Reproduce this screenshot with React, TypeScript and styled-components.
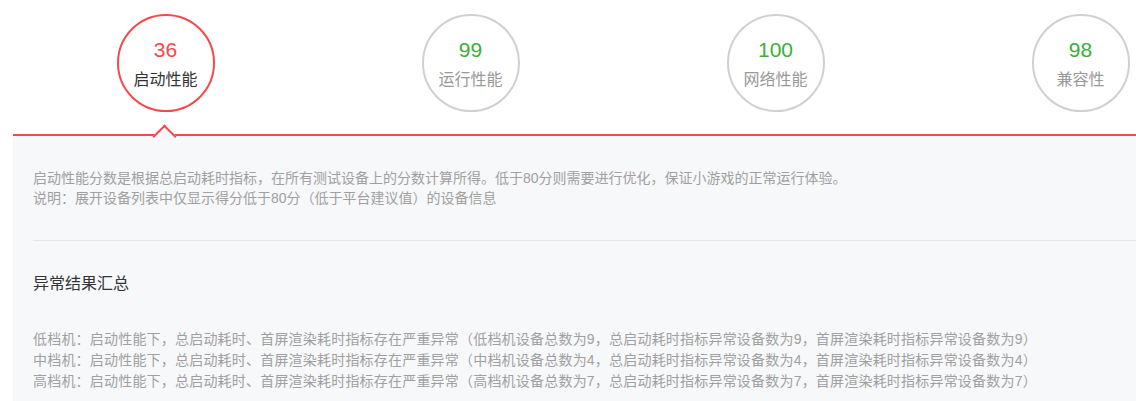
import React from 'react';
import styled, { createGlobalStyle } from 'styled-components';

const GlobalStyle = createGlobalStyle`
  html, body {
    margin: 0;
    padding: 0;
    background: #ffffff;
    font-family: "Liberation Sans", "Noto Sans CJK SC", sans-serif;
  }
`;

type Score = {
  value: number;
  label: string;
};

const scores: Score[] = [
  { value: 36, label: '启动性能' },
  { value: 99, label: '运行性能' },
  { value: 100, label: '网络性能' },
  { value: 98, label: '兼容性' },
];

const Page = styled.div`
  width: 1136px;
  height: 401px;
  overflow: hidden;
  padding-left: 13px;
  box-sizing: border-box;
`;

const Inner = styled.div`
  width: 1240px;
`;

const TabBar = styled.div`
  display: flex;
  height: 134px;
`;

const Tab = styled.div`
  flex: 0 0 305px;
  display: flex;
  justify-content: center;
  padding-top: 14px;
  position: relative;
`;

const Circle = styled.div<{ $active: boolean }>`
  width: 98px;
  height: 98px;
  box-sizing: border-box;
  border-radius: 50%;
  border: 2px solid ${(p) => (p.$active ? '#f5494b' : '#d0d0d0')};
  display: flex;
  flex-direction: column;
  align-items: center;
  padding-top: 20px;
`;

const Value = styled.div<{ $bad: boolean }>`
  font-size: 21px;
  line-height: 28px;
  color: ${(p) => (p.$bad ? '#f5494b' : '#38b03a')};
`;

const Label = styled.div<{ $active: boolean }>`
  margin-top: 5px;
  font-size: 16px;
  line-height: 22px;
  color: ${(p) => (p.$active ? '#333333' : '#999999')};
`;

const Notch = styled.span`
  position: absolute;
  left: 50%;
  bottom: -11px;
  width: 17px;
  height: 17px;
  margin-left: -10px;
  box-sizing: border-box;
  background: #f7f8fa;
  border-top: 2px solid #f5494b;
  border-left: 2px solid #f5494b;
  transform: rotate(45deg);
  z-index: 1;
`;

const Panel = styled.div`
  background: #f7f8fa;
  border-top: 2px solid #f5494b;
  padding: 32px 0 40px 20px;
  min-height: 300px;
`;

const Desc = styled.p`
  margin: 0;
  font-size: 14px;
  line-height: 20px;
  color: #a0a0a0;
`;

const Divider = styled.div`
  height: 1px;
  background: #e6e7ea;
  margin: 32px 0 0;
`;

const Heading = styled.h3`
  margin: 32px 0 0;
  font-size: 16px;
  line-height: 22px;
  font-weight: normal;
  color: #333333;
`;

const List = styled.div`
  margin-top: 34px;
`;

const Row = styled.div`
  font-size: 14px;
  line-height: 21px;
  color: #a0a0a0;
  white-space: nowrap;
  letter-spacing: 0.2px;
`;

const tiers = [
  { name: '低档机', total: 9, start: 9, render: 9 },
  { name: '中档机', total: 4, start: 4, render: 4 },
  { name: '高档机', total: 7, start: 7, render: 7 },
];

export default function App() {
  return (
    <Page>
      <GlobalStyle />
      <Inner>
        <TabBar>
          {scores.map((s, i) => (
            <Tab key={s.label}>
              <Circle $active={i === 0}>
                <Value $bad={s.value < 80}>{s.value}</Value>
                <Label $active={i === 0}>{s.label}</Label>
              </Circle>
              {i === 0 && <Notch />}
            </Tab>
          ))}
        </TabBar>
        <Panel>
          <Desc>启动性能分数是根据总启动耗时指标，在所有测试设备上的分数计算所得。低于80分则需要进行优化，保证小游戏的正常运行体验。</Desc>
          <Desc>说明：展开设备列表中仅显示得分低于80分（低于平台建议值）的设备信息</Desc>
          <Divider />
          <Heading>异常结果汇总</Heading>
          <List>
            {tiers.map((t) => (
              <Row key={t.name}>
                {t.name}：启动性能下，总启动耗时、首屏渲染耗时指标存在严重异常（{t.name}设备总数为{t.total}，总启动耗时指标异常设备数为{t.start}，首屏渲染耗时指标异常设备数为{t.render}）
              </Row>
            ))}
          </List>
        </Panel>
      </Inner>
    </Page>
  );
}
